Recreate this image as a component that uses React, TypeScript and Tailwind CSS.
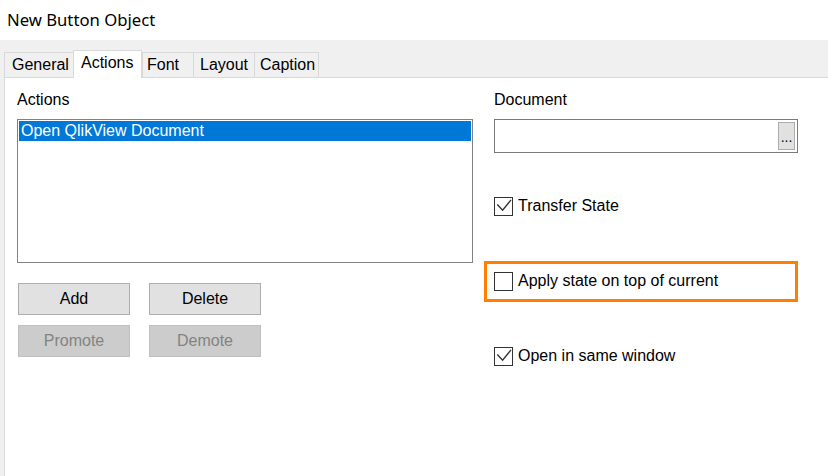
import React from 'react';

const TABS = [
  { label: 'General', w: 'w-[69px]', pl: 'pl-[7px]' },
  { label: 'Actions', w: 'w-[69px]', pl: 'pl-[7px]', active: true },
  { label: 'Font', w: 'w-[51px]', pl: 'pl-[4px]' },
  { label: 'Layout', w: 'w-[61px]', pl: 'pl-[6px]' },
  { label: 'Caption', w: 'w-[65px]', pl: 'pl-[5px]', last: true },
];

function CheckBox({ checked }: { checked?: boolean }) {
  return (
    <div className="w-[19px] h-[19px] border border-[#333333] bg-white shrink-0 relative">
      {checked && (
        <svg className="absolute left-0 top-0" width="17" height="17" viewBox="0 0 17 17">
          <path d="M2.3 6.6 L7.6 12.2 L16 1.9" fill="none" stroke="#333333" strokeWidth="1.4" />
        </svg>
      )}
    </div>
  );
}

function WinButton({ label, disabled }: { label: string; disabled?: boolean }) {
  return (
    <div
      className={`w-[112px] h-[32px] border flex items-center justify-center text-[16px] ${
        disabled ? 'bg-[#cccccc] border-[#bfbfbf] text-[#838383]' : 'bg-[#e1e1e1] border-[#adadad] text-black'
      }`}
    >
      {label}
    </div>
  );
}

export default function App() {
  return (
    <div className="w-[828px] h-[476px] overflow-hidden bg-white text-black font-['Liberation_Sans',Arial,sans-serif] text-[16px] leading-[18px]">
      {/* window title */}
      <div className="h-[40px] flex items-center pl-[7px] pb-px font-['Noto_Sans',sans-serif] text-[16.7px]">
        New Button Object
      </div>

      <div className="h-[436px] bg-[#f0f0f0] pl-[4px] pt-[10px] flex flex-col">
        {/* tabs */}
        <div className="flex items-end h-[27px]">
          {TABS.map((t) =>
            t.active ? (
              <div
                key={t.label}
                className={`${t.w} ${t.pl} h-[28px] -mb-px relative z-10 bg-white border-l border-r border-t border-[#d9d9d9] flex items-center pb-[3px]`}
              >
                {t.label}
              </div>
            ) : (
              <div
                key={t.label}
                className={`${t.w} ${t.pl} h-[25px] border-t border-l ${t.last ? 'border-r' : ''} border-[#d9d9d9] flex items-center`}
              >
                {t.label}
              </div>
            )
          )}
        </div>

        {/* tab page */}
        <div className="flex-1 bg-white border-l border-t border-[#d9d9d9] pl-[12px] pt-[13px] flex">
          {/* left column */}
          <div className="w-[456px] flex flex-col">
            <div className="h-[18px]">Actions</div>
            <div className="mt-[10px] h-[144px] border border-[#828282] p-px">
              <div className="h-[20px] bg-[#0078d7] text-white pl-[2px] flex items-center">
                Open QlikView Document
              </div>
            </div>
            <div className="mt-[20px] ml-px flex flex-col gap-[10px]">
              <div className="flex gap-[19px]">
                <WinButton label="Add" />
                <WinButton label="Delete" />
              </div>
              <div className="flex gap-[19px]">
                <WinButton label="Promote" disabled />
                <WinButton label="Demote" disabled />
              </div>
            </div>
          </div>

          {/* right column */}
          <div className="ml-[21px] w-[304px] flex flex-col">
            <div className="h-[18px]">Document</div>
            <div className="mt-[10px] h-[34px] border border-[#7a7a7a] flex justify-end p-[2px]">
              <div className="w-[17px] h-[28px] bg-[#e1e1e1] border border-[#adadad] flex items-end justify-center text-[14px] leading-[14px] pb-[5px]">
                ...
              </div>
            </div>

            <div className="mt-[43px] h-[20px] flex items-center gap-[5px]">
              <CheckBox checked />
              <span>Transfer State</span>
            </div>

            <div className="mt-[55px] h-[20px] flex items-center gap-[5px] relative">
              <CheckBox />
              <span>Apply state on top of current</span>
              {/* highlight annotation */}
              <div className="absolute left-[-10px] top-[-10px] w-[314px] h-[41px] border-[3px] border-[#ff8000] pointer-events-none" />
            </div>

            <div className="mt-[55px] h-[20px] flex items-center gap-[5px]">
              <CheckBox checked />
              <span>Open in same window</span>
            </div>
          </div>
        </div>
      </div>
    </div>
  );
}
